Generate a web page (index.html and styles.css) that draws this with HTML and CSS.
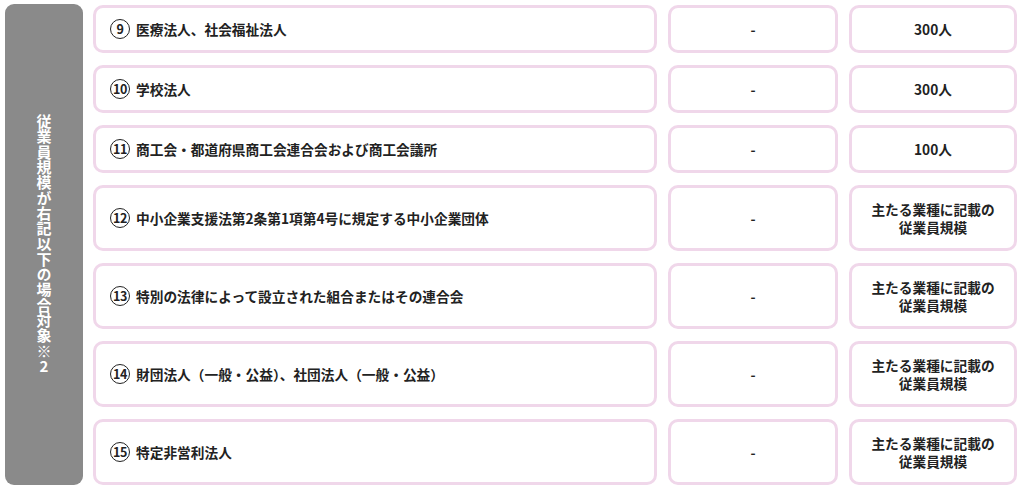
FILE: index.html
```html
<!DOCTYPE html>
<html lang="ja">
<head>
<meta charset="utf-8">
<link rel="stylesheet" href="styles.css">
</head>
<body>
<div class="wrap">
  <div class="side"><span class="side-text">従業員規模が右記以下の場合対象※2</span></div>
  <div class="grid">
    <div class="cell name"><span class="num">9</span>医療法人、社会福祉法人</div>
    <div class="cell val">-</div>
    <div class="cell val">300人</div>

    <div class="cell name"><span class="num">10</span>学校法人</div>
    <div class="cell val">-</div>
    <div class="cell val">300人</div>

    <div class="cell name"><span class="num">11</span>商工会・都道府県商工会連合会および商工会議所</div>
    <div class="cell val">-</div>
    <div class="cell val">100人</div>

    <div class="cell name"><span class="num">12</span>中小企業支援法第2条第1項第4号に規定する中小企業団体</div>
    <div class="cell val">-</div>
    <div class="cell val">主たる業種に記載の<br>従業員規模</div>

    <div class="cell name"><span class="num">13</span>特別の法律によって設立された組合またはその連合会</div>
    <div class="cell val">-</div>
    <div class="cell val">主たる業種に記載の<br>従業員規模</div>

    <div class="cell name"><span class="num">14</span>財団法人（一般・公益）、社団法人（一般・公益）</div>
    <div class="cell val">-</div>
    <div class="cell val">主たる業種に記載の<br>従業員規模</div>

    <div class="cell name"><span class="num">15</span>特定非営利法人</div>
    <div class="cell val">-</div>
    <div class="cell val">主たる業種に記載の<br>従業員規模</div>
  </div>
</div>
</body>
</html>
```

FILE: styles.css
```css
* { box-sizing: border-box; }
html, body { margin: 0; padding: 0; background: #fff; }
body {
  font-family: "Noto Sans CJK JP", "Noto Sans", sans-serif;
  color: #222;
  font-weight: 700;
  font-size: 13.7px;
}
.wrap {
  display: flex;
  gap: 10px;
  padding: 4px 5px 0 5px;
  width: 1024px;
  height: 490px;
}
.side {
  width: 78px;
  height: 481px;
  background: #8a8a8a;
  border-radius: 9px;
  display: flex;
  align-items: center;
  justify-content: center;
}
.side-text {
  writing-mode: vertical-rl;
  text-orientation: upright;
  color: #fff;
  font-size: 15px;
  line-height: 1;
  letter-spacing: 0.3px;
}
.grid {
  margin-top: 1px;
  display: grid;
  grid-template-columns: 564px 170px 168px;
  grid-template-rows: 48px 48px 48px 66px 66px 66px 66px;
  column-gap: 11px;
  row-gap: 12px;
}
.cell {
  border: 3px solid #f0d7ea;
  border-radius: 10px;
  background: #fff;
  display: flex;
  align-items: center;
}
.name {
  padding-left: 14px;
  gap: 6px;
}
.val {
  justify-content: center;
  text-align: center;
  line-height: 18px;
}
.num {
  display: inline-flex;
  align-items: center;
  justify-content: center;
  width: 20px;
  height: 20px;
  border: 1.3px solid #222;
  border-radius: 50%;
  font-size: 12.5px;
  letter-spacing: -0.5px;
  line-height: 1;
}
```
